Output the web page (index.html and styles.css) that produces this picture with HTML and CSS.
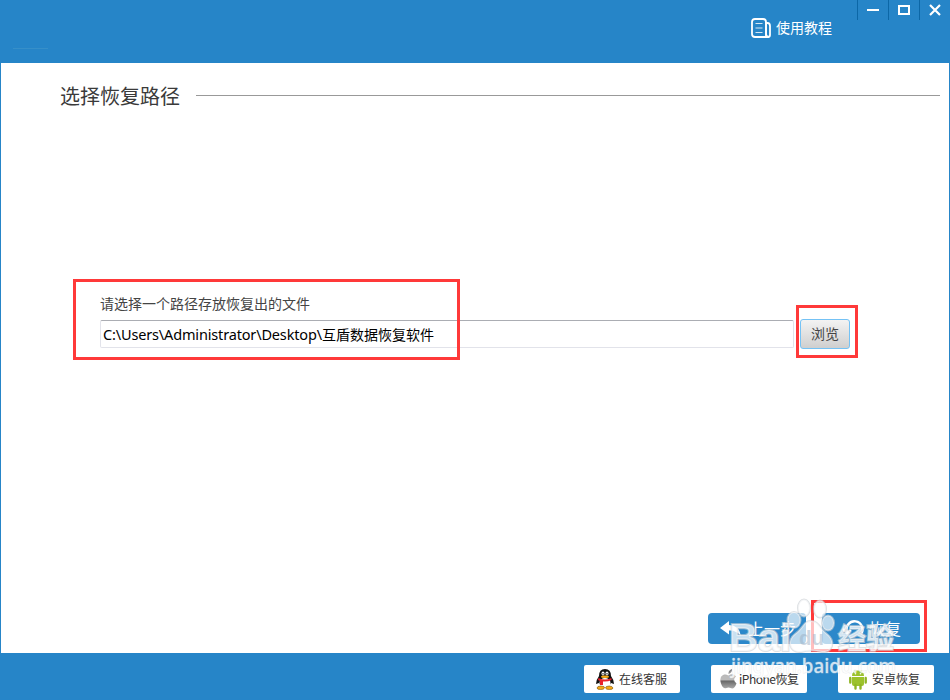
FILE: index.html
```
<!DOCTYPE html>
<html lang="zh-CN">
<head>
<meta charset="utf-8">
<title>选择恢复路径</title>
<link rel="stylesheet" href="styles.css">
</head>
<body>
<div class="window">
  <header class="titlebar">
    <span class="trace"></span>
    <a class="tutorial">
      <svg width="21" height="21" viewBox="0 0 21 21" fill="none" stroke="#fff" stroke-width="1.8"><path d="M4 1h8q3 0 3 3v12q0 3 3 3H4q-3 0-3-3V4q0-3 3-3Z"/><path d="M15 5h1.500q2.500 0 2.500 3v9q0 2-2 2t-2-2Z"/><path d="M4.500 5.500h7M4.500 10h7M4.500 14.500h7" stroke-width="1.100" stroke="#d5e7f4"/></svg>
      <span>使用教程</span>
    </a>
    <div class="controls">
      <span class="control"><svg width="12" height="12"><path d="M0 5h12v2H0z" fill="#fff"/></svg></span>
      <span class="control"><svg width="12" height="12"><path d="M1 2h10v8H1z" fill="none" stroke="#fff" stroke-width="2"/></svg></span>
      <span class="control"><svg width="12" height="12"><path d="M1 1l10 10M11 1L1 11" stroke="#fff" stroke-width="2.200"/></svg></span>
    </div>
  </header>
  <main class="content">
    <div class="heading"><h1>选择恢复路径</h1><span class="rule"></span></div>
    <section class="picker">
      <label class="caption">请选择一个路径存放恢复出的文件</label>
      <div class="row">
        <div class="path">C:\Users\Administrator\Desktop\<span class="cjk">互盾数据恢复软件</span></div>
        <button class="browse">浏览</button>
      </div>
    </section>
    <div class="actions">
      <button class="action back"><svg width="22" height="16" viewBox="0 0 22 16" fill="#fff"><path d="M0 7 9 0v4q10 0 12 11Q16 9 9 9.500v4Z"/></svg><span>上一步</span></button>
      <button class="action recover"><svg width="22" height="20" viewBox="0 0 22 20" fill="none" stroke="#fff" stroke-width="2.500"><path d="M4 13A8 8 0 1 1 18 15"/><path d="M0 10l4 4 4-3"/></svg><span>恢复</span></button>
    </div>
  </main>
  <footer class="footer">
    <a class="link">
      <svg width="20" height="22" viewBox="0 0 20 22"><path d="M4 8Q4 1 10 1t6 7q3 4 3 8l-3-1q-2 4-6 4t-6-4l-3 1q0-4 3-8Z" fill="#111"/><ellipse cx="10" cy="15" rx="5.500" ry="5" fill="#fff"/><ellipse cx="8" cy="5.500" rx="1.500" ry="2" fill="#fff"/><ellipse cx="12" cy="5.500" rx="1.500" ry="2" fill="#fff"/><path d="M8 5v1.500M12 5v1.500" stroke="#111"/><ellipse cx="10" cy="8.700" rx="4" ry="1.200" fill="#f8a914"/><path d="M3.500 10q6.500 3 13 0v2q-4 2-8.500 1.500V17H5v-4l-2-1Z" fill="#e9202b"/><path d="M2 20q0-2 4-2t3.500 2q-.5 1.500-4 1.500T2 20ZM10.500 20q0-2 3.500-2t4 2q0 1.500-3.500 1.500T10.500 20Z" fill="#f8a914" stroke="#5c3c09" stroke-width=".5"/></svg>
      <span>在线客服</span>
    </a>
    <a class="link apple">
      <svg width="17" height="20" viewBox="0 0 17 20"><defs><linearGradient id="silver" x2="0" y2="1"><stop stop-color="#777"/><stop offset=".35" stop-color="#bbb"/><stop offset=".58" stop-color="#bbb"/><stop offset=".6" stop-color="#666"/><stop offset="1" stop-color="#aaa"/></linearGradient></defs><path d="M8.500 5Q8 1.500 12 0q.5 3.500-3.500 5ZM8.500 6.500Q13 3.500 16 7.500q-4 3 .5 7Q14 21 10.500 19q-2-1-4 0Q3 20.500 1 14.500-1 8 3 6q2-1 5.500.5Z" fill="url(#silver)"/></svg>
      <span>iPhone恢复</span>
    </a>
    <a class="link android">
      <svg width="18" height="21" viewBox="0 0 18 21" fill="#9cc22c"><path d="M3 7q0-5.500 6-5.500T15 7ZM3 8h12v7q0 2-2 2H5q-2 0-2-2Z"/><path d="M5.500 1 7 3M12.500 1 11 3" stroke="#9cc22c"/><path d="M1.300 9v4.500M16.700 9v4.500M6.500 16v3.500M11.500 16v3.500" stroke="#8fb524" stroke-width="2.400" stroke-linecap="round"/><circle cx="6.500" cy="4.800" r=".8" fill="#fff"/><circle cx="11.500" cy="4.800" r=".8" fill="#fff"/></svg>
      <span>安卓恢复</span>
    </a>
  </footer>
  <div class="mark mark-path"></div>
  <div class="mark mark-browse"></div>
  <div class="mark mark-recover"></div>
  <svg class="watermark" width="180" height="92" viewBox="722 592 180 92">
    <g class="paw"><ellipse cx="804" cy="608" rx="6" ry="8.500"/><ellipse cx="820" cy="609" rx="6" ry="8.500"/><ellipse cx="794" cy="620" rx="6.500" ry="8"/><ellipse cx="828" cy="623" rx="6" ry="7.500"/><path d="M811 621c8 0 9 8 16 13 9 7 6 19-5 18-7-2-14-2-21 0-11 1-15-11-6-18 8-5 8-13 16-13Z"/></g>
    <text class="brand" x="729" y="651" textLength="62" lengthAdjust="spacingAndGlyphs">Bai</text>
    <text class="du" x="799" y="645" textLength="25" lengthAdjust="spacingAndGlyphs">du</text>
    <text class="brand-cjk" x="838" y="649">经验</text>
    <text class="domain" x="731" y="673" textLength="165" lengthAdjust="spacingAndGlyphs">jingyan.baidu.com</text>
  </svg>
</div>
</body>
</html>
```
FILE: styles.css
```
* { box-sizing: border-box; }
body { margin: 0; font-family: "Noto Sans CJK SC", sans-serif; font-weight: 400; }
button { font: inherit; padding: 0; }
svg { flex: none; display: block; }
.window { position: relative; width: 950px; height: 700px; display: flex; flex-direction: column; background: #2685c8; overflow: hidden; }
.titlebar { height: 63px; display: flex; justify-content: flex-end; align-items: flex-start; }
.trace { width: 35px; height: 1px; margin: 48px auto 0 13px; background: #368fc9; }
.tutorial { display: flex; align-items: center; gap: 4px; height: 21px; margin: 18px 25px 0 0; color: #fff; font-size: 14px; }
.tutorial span { line-height: 20px; margin-top: -3px; }
.controls { display: flex; }
.control { width: 31px; height: 20px; border-left: 1px solid #0c67a7; display: flex; align-items: center; justify-content: center; }
.content { height: 590px; margin: 0 1px; background: #fff; display: flex; flex-direction: column; padding: 17px 0 0 59px; }
.heading { height: 30px; display: flex; align-items: center; gap: 16px; padding-right: 9px; }
h1 { margin: 0; font-size: 20px; line-height: 30px; font-weight: 400; color: #3a3a3a; padding-top: 1px; }
.rule { flex: 1; height: 1px; background: #999; }
.picker { margin: 183px 0 0 40px; }
.caption { display: block; height: 27px; line-height: 20px; font-size: 14px; color: #444; }
.row { display: flex; gap: 6px; align-items: flex-start; }
.path { width: 694px; height: 28px; border: 1px solid #e2e3ea; border-top-color: #abadb3; border-radius: 2px; padding-left: 2px; font: 400 14.500px/26px "Noto Sans", "Noto Sans CJK SC", sans-serif; letter-spacing: -.16px; white-space: nowrap; color: #000; }
.cjk { font-size: 14px; letter-spacing: 0; }
.browse { width: 50px; height: 30px; margin-top: -1px; border: 1px solid #74c2f5; border-radius: 3px; background: linear-gradient(#f3f3f3, #cfcfcf); font-size: 14px; line-height: 26px; padding-bottom: 2px; color: #444; }
.actions { display: flex; gap: 16px; margin: auto 29px 9px auto; }
.action { width: 98px; height: 31px; border: 0; border-radius: 4px; background: #2c88ca; color: #fff; display: flex; align-items: center; font-size: 16px; }
.action span { margin-top: -2px; }
.back { padding-left: 12px; gap: 6px; }
.recover { padding-left: 21px; gap: 4px; }
.footer { height: 47px; display: flex; justify-content: flex-end; gap: 31px; padding: 12px 16px 0 0; }
.link { width: 96px; height: 28px; background: #fff; border-radius: 2px; display: flex; align-items: center; padding-left: 11px; gap: 4px; font-size: 12px; color: #333; white-space: nowrap; }
.link span { margin-top: -1px; }
.apple { padding-left: 9px; gap: 2px; letter-spacing: -.5px; }
.android { padding-left: 11px; gap: 5px; }
.mark { position: absolute; border: 3px solid #ff3939; }
.mark-path { left: 73px; top: 279px; width: 387px; height: 81px; }
.mark-browse { left: 796px; top: 305px; width: 62px; height: 53px; }
.mark-recover { left: 811px; top: 600px; width: 116px; height: 52px; }
.watermark { position: absolute; left: 722px; top: 592px; fill: rgba(255, 255, 255, .76); stroke: rgba(205, 209, 213, .65); stroke-width: 2px; paint-order: stroke; }
.paw { fill: rgba(255, 255, 255, .68); }
.brand { font: 700 39px "Liberation Sans", sans-serif; }
.du { font: 700 20px "Liberation Sans", sans-serif; fill: rgba(155, 175, 195, .5); stroke: none; }
.brand-cjk { font: 700 28px "Noto Sans CJK SC", sans-serif; }
.domain { font: 500 19px "Noto Sans", sans-serif; stroke: rgba(210, 214, 218, .4); stroke-width: 1px; }
```
